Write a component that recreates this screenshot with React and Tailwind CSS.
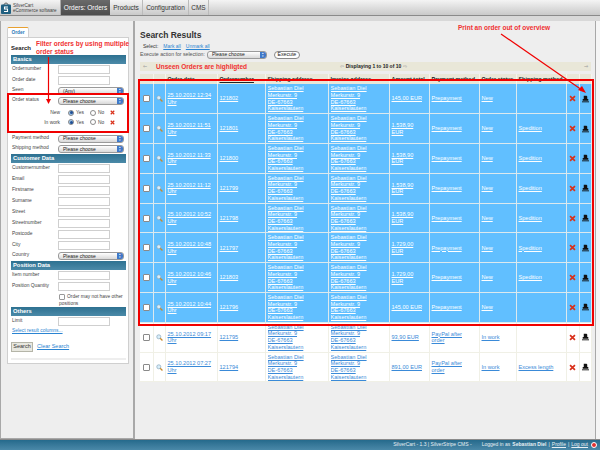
const rows = [
  { date: "25.10.2012 12:34", no: "121802", total: "145,00 EUR", pay: "Prepayment", status: "New", ship: "" },
  { date: "25.10.2012 11:51", no: "121801", total: "1.538,90 EUR", pay: "Prepayment", status: "New", ship: "Spedition" },
  { date: "25.10.2012 11:33", no: "121800", total: "1.538,90 EUR", pay: "Prepayment", status: "New", ship: "Spedition" },
  { date: "25.10.2012 11:12", no: "121799", total: "1.538,90 EUR", pay: "Prepayment", status: "New", ship: "Spedition" },
  { date: "25.10.2012 10:52", no: "121798", total: "1.538,90 EUR", pay: "Prepayment", status: "New", ship: "Spedition" },
  { date: "25.10.2012 10:48", no: "121797", total: "1.729,00 EUR", pay: "Prepayment", status: "New", ship: "Spedition" },
  { date: "25.10.2012 10:46", no: "121803", total: "1.729,00 EUR", pay: "Prepayment", status: "New", ship: "Spedition" },
  { date: "25.10.2012 10:44", no: "121796", total: "145,00 EUR", pay: "Prepayment", status: "New", ship: "" },
  { date: "25.10.2012 09:17", no: "121795", total: "93,90 EUR", pay: "PayPal after order", status: "In work", ship: "", seen: true },
  { date: "25.10.2012 07:27", no: "121794", total: "891,00 EUR", pay: "PayPal after order", status: "In work", ship: "Excess length", seen: true },
];

function Cross({ className = "w-[7px] h-[7px]" }) {
  return (
    <svg viewBox="0 0 10 10" className={className}>
      <path d="M1.5 1.5L8.5 8.5M8.5 1.5L1.5 8.5" stroke="#d9301a" strokeWidth="2.4" />
    </svg>
  );
}

function Magnifier() {
  return (
    <svg viewBox="0 0 10 10" className="w-[9px] h-[9px]">
      <circle cx="4" cy="4" r="2.9" fill="#d8eefa" stroke="#8aa8bc" strokeWidth="1" />
      <path d="M6 6L9.2 9.2" stroke="#c98a2b" strokeWidth="1.8" />
    </svg>
  );
}

function Printer() {
  return (
    <svg viewBox="0 0 10 10" className="w-[8px] h-[8px]">
      <path d="M2.5 0.5H6.5L7.5 1.5V5H9V7.5H1V5H2.5Z" fill="#111" />
      <rect x="0" y="8.4" width="10" height="1.3" fill="#111" />
    </svg>
  );
}

function SelectBox({ value = "Please choose", className = "w-[66px]" }) {
  return (
    <div className={`${className} h-[8px] rounded-[3px] border border-[#9a9a9a] bg-gradient-to-b from-white to-[#d8d8d8] flex items-center justify-between pl-[4px] text-[5px] leading-none text-[#222]`}>
      <span>{value}</span>
      <span className="w-[6px] h-full bg-[#3f78c8] rounded-r-[2px] flex flex-col items-center justify-center text-white text-[3px] leading-[3px]">
        <span>▴</span>
        <span>▾</span>
      </span>
    </div>
  );
}

function Field({ label }) {
  return (
    <div className="h-[11px] flex items-center">
      <span className="w-[47px] pl-[1px] text-[4.9px] text-[#444] whitespace-nowrap -translate-y-[1px]">{label}</span>
      <div className="w-[52px] h-[9px] border border-[#cfcfcf] bg-white" />
    </div>
  );
}

function SelectField({ label, value, h = "h-[11px]" }) {
  return (
    <div className={`${h} flex items-center`}>
      <span className="w-[47px] pl-[1px] text-[4.9px] text-[#444] whitespace-nowrap -translate-y-[1px]">{label}</span>
      <SelectBox value={value} />
    </div>
  );
}

function Heading({ children }) {
  return (
    <div className="h-[9px] flex items-center pl-[2px] bg-gradient-to-b from-[#2d7191] to-[#4b8aa8] text-white font-bold text-[5.8px] w-[115px]">
      {children}
    </div>
  );
}

function Radio({ checked }) {
  return (
    <span className={`w-[6px] h-[6px] rounded-full border border-[#8a8a8a] flex items-center justify-center ${checked ? "bg-[#9cc4ec]" : "bg-white"}`}>
      {checked && <span className="w-[3px] h-[3px] rounded-full bg-[#1f4f94]" />}
    </span>
  );
}

function StatusRow({ label }) {
  return (
    <div className="h-[9.5px] flex items-center text-[4.9px] text-[#444]">
      <span className="w-[57px] pr-[8px] text-right">{label}</span>
      <Radio checked />
      <span className="w-[16px] pl-[2px]">Yes</span>
      <Radio />
      <span className="w-[14px] pl-[2px]">No</span>
      <Cross className="w-[5px] h-[5px]" />
    </div>
  );
}

function Sidebar() {
  return (
    <aside className="w-[134px] shrink-0 bg-[#eeeeee] border border-[#a8a8a8] border-t-0 pt-[6px] pl-[6px] pr-[5px]">
      <div className="w-[22px] h-[10px] bg-white border border-b-0 border-[#d0d0d0] border-t-[#e8a030] rounded-t-[2px] text-[#2a78b8] font-bold text-[4.8px] flex items-center justify-center">
        Order
      </div>
      <div className="w-[122px] h-[327px] bg-white border border-[#cfcfcf] pl-[3px] pt-[6px]">
        <div className="text-[6px] font-bold leading-[9px] text-[#222] h-[11px]">Search</div>
        <Heading>Basics</Heading>
        <div className="flex flex-col">
          <Field label="Ordernumber" />
          <Field label="Order date" />
          <SelectField label="Seen" value="(Any)" h="h-[10px]" />
          <SelectField label="Order status" h="h-[10px]" />
          <div className="h-[2px]" />
          <StatusRow label="New" />
          <StatusRow label="In work" />
          <div className="h-[6px]" />
          <SelectField label="Payment method" />
          <SelectField label="Shipping method" h="h-[10px]" />
        </div>
        <Heading>Customer Data</Heading>
        <Field label="Customernumber" />
        <Field label="Email" />
        <Field label="Firstname" />
        <Field label="Surname" />
        <Field label="Street" />
        <Field label="Streetnumber" />
        <Field label="Postcode" />
        <Field label="City" />
        <SelectField label="Country" h="h-[10px]" />
        <Heading>Position Data</Heading>
        <Field label="Item number" />
        <Field label="Position Quantity" />
        <div className="pl-[48px] h-[15px] text-[4.9px] leading-[7px] text-[#444] pt-[1px]">
          <span className="inline-block w-[6px] h-[6px] border border-[#999] rounded-[1px] align-middle mr-[2px]" />
          Order may not have other positions
        </div>
        <Heading>Others</Heading>
        <Field label="Limit" />
        <div className="h-[8px] mb-[5px] pl-[1px] flex items-center text-[4.9px] text-[#2a84d2] underline">Select result columns...</div>
        <div className="flex items-center gap-[4px] h-[13px]">
          <div className="w-[22px] h-[10px] border border-[#b5b5a8] bg-[#e8e8e0] flex items-center justify-center text-[5.5px] text-[#333]">Search</div>
          <span className="text-[5.5px] text-[#2a84d2] underline">Clear Search</span>
        </div>
        <div className="mt-[5px] w-[115px] h-[2px] bg-[#eeeeee]" />
      </div>
    </aside>
  );
}

function TableHead() {
  const cols = ["", "", "Order date", "Ordernumber", "Shipping address", "Invoice address", "Amount total", "Payment method", "Order status", "Shipping method", "", ""];
  return (
    <thead>
      <tr className="h-[10px] bg-[#e9e7d8]">
        {cols.map((c, i) => (
          <th key={i} className={`border-r border-[#f6f5ec] px-[2px] text-left font-bold text-[5.4px] text-[#222] whitespace-nowrap overflow-hidden ${c === "Ordernumber" ? "underline" : ""}`}>
            {c}
          </th>
        ))}
      </tr>
    </thead>
  );
}

function OrderRow({ r }) {
  const link = r.seen ? "text-[#3a8ad8] underline" : "text-white underline";
  const cell = `border-r px-[2px] ${r.seen ? "border-[#f0f0e6]" : "border-[#dce9ee]"}`;
  return (
    <tr className={`h-[29.8px] text-[5.6px] leading-[6.7px] border-b ${r.seen ? "bg-white border-[#f0f0e6]" : "bg-[#61bfff] border-[#dce9ee]"}`}>
      <td className={cell}>
        <span className="block w-[7px] h-[7px] mx-auto bg-white border border-[#8a8a8a] rounded-[1px]" />
      </td>
      <td className={cell}><span className="flex justify-center"><Magnifier /></span></td>
      <td className={`${cell} ${link}`}>{r.date} Uhr</td>
      <td className={`${cell} ${link}`}>{r.no}</td>
      <td className={`${cell} ${link}`}>
        <div className="h-[27px] overflow-hidden whitespace-nowrap">Sebastian Diel<br />Merkurstr. 9<br />DE-67663<br />Kaiserslautern</div>
      </td>
      <td className={`${cell} ${link}`}>
        <div className="h-[27px] overflow-hidden whitespace-nowrap">Sebastian Diel<br />Merkurstr. 9<br />DE-67663<br />Kaiserslautern</div>
      </td>
      <td className={`${cell} ${link} pr-[6px]`}>{r.total}</td>
      <td className={`${cell} ${link}`}>{r.pay}</td>
      <td className={`${cell} ${link}`}>{r.status}</td>
      <td className={`${cell} ${link}`}>{r.ship}</td>
      <td className={cell}><span className="flex justify-center"><Cross /></span></td>
      <td className={cell}><span className="flex justify-center"><Printer /></span></td>
    </tr>
  );
}

function Results() {
  return (
    <main className="w-[462px] shrink-0 bg-[#eeeeee] border-l border-r border-[#a8a8a8] pl-[5px] pr-[4px] pt-[9px]">
      <h1 className="text-[8.5px] font-bold leading-[10px] text-[#333] h-[14px]">Search Results</h1>
      <div className="h-[6px] pl-[3px] flex items-center gap-[5px] text-[5px] text-[#333]">
        <span>Select:</span>
        <span className="text-[#2a84d2] underline">Mark all</span>
        <span className="text-[#2a84d2] underline">Unmark all</span>
      </div>
      <div className="h-[9px] flex items-center gap-[1px] text-[5.2px] text-[#555]">
        <span className="mr-[1px]">Execute action for selection:</span>
        <SelectBox className="w-[60px]" />
        <span className="ml-[6px] w-[26px] h-[8px] border border-[#888] rounded-[4px] bg-white flex items-center justify-center text-[#222]">Execute</span>
      </div>
      <div className="mt-[3px] w-[451px] h-[9px] bg-[#e9e7d8] flex items-center justify-between px-[3px] text-[5px] text-[#222]">
        <span className="text-[#999]">⇐</span>
        <span className="font-bold pl-[16px]">
          <span className="text-[#999] font-normal">⇦ </span>Displaying 1 to 10 of 10<span className="text-[#999] font-normal"> ⇨</span>
        </span>
        <span className="text-[#999]">⇒</span>
      </div>
      <table className="mt-[3px] w-[451px] table-fixed border-collapse border-b border-[#cfcfc5]">
        <colgroup>
          <col className="w-[13px]" />
          <col className="w-[12px]" />
          <col className="w-[52px]" />
          <col className="w-[48px]" />
          <col className="w-[63px]" />
          <col className="w-[61px]" />
          <col className="w-[40px]" />
          <col className="w-[50px]" />
          <col className="w-[37px]" />
          <col className="w-[50px]" />
          <col className="w-[13px]" />
          <col className="w-[12px]" />
        </colgroup>
        <TableHead />
        <tbody>
          {rows.map((r) => (
            <OrderRow key={r.no} r={r} />
          ))}
        </tbody>
      </table>
    </main>
  );
}

function Header() {
  return (
    <header className="h-[15px] bg-gradient-to-b from-[#f4f4f4] to-[#c9c9c9] flex items-stretch">
      <div className="w-[61px] flex items-center pl-[1px] gap-[2px] border-r border-[#aaa]">
        <svg viewBox="0 0 10 12" className="w-[10px] h-[12px] shrink-0">
          <path d="M3 3C3 0.5 7 0.5 7 3" fill="none" stroke="#333" strokeWidth="0.8" />
          <rect x="0" y="2.5" width="10" height="9.5" rx="1" fill="#1f5f80" />
          <path d="M7 5H3.5V7H6.5V9.5H3" fill="none" stroke="#fff" strokeWidth="1.1" />
        </svg>
        <div className="text-[4.6px] leading-[5px] text-[#444] whitespace-nowrap">SilverCart<br />eCommerce software</div>
      </div>
      <div className="w-[49px] bg-gradient-to-b from-[#6a6a6a] to-[#4d4d4d] flex items-center justify-center text-[6.5px] text-white">Orders: Orders</div>
      <div className="w-[33px] flex items-center justify-center text-[6.5px] text-[#333] border-r border-[#bbb]">Products</div>
      <div className="w-[46px] flex items-center justify-center text-[6.5px] text-[#333] border-r border-[#bbb]">Configuration</div>
      <div className="w-[20px] flex items-center justify-center text-[6.5px] text-[#333] border-r border-[#bbb]">CMS</div>
    </header>
  );
}

function Annotations() {
  return (
    <>
      <div className="absolute left-[7px] top-[93px] w-[122px] h-[40px] border-2 border-[#f00000]" />
      <div className="absolute left-[138px] top-[79px] w-[456px] h-[247px] border-2 border-[#f00000]" />
      <svg className="absolute inset-0 w-[600px] h-[450px] pointer-events-none" viewBox="0 0 600 450">
        <path d="M48.5 57V100" stroke="#f00000" strokeWidth="1.2" />
        <path d="M46 99L48.5 104L51 99Z" fill="#f00000" />
        <path d="M501 34L582 90" stroke="#f00000" strokeWidth="1.2" />
        <path d="M578 90L586 93L582 86Z" fill="#f00000" />
      </svg>
      <div className="absolute left-[36px] top-[40px] w-[98px] text-[6.5px] leading-[8px] font-bold text-[#f03030]">
        Filter orders by using multiple order status
      </div>
      <div className="absolute left-[156px] top-[62px] text-[6.5px] leading-[9px] font-bold text-[#f03030]">
        Unseen Orders are highligted
      </div>
      <div className="absolute left-[458px] top-[23.5px] text-[6.5px] leading-[8px] font-bold text-[#f03030]">
        Print an order out of overview
      </div>
    </>
  );
}

export default function App() {
  return (
    <div className="relative w-[600px] h-[450px] overflow-hidden bg-[#f5f5f5] font-['Liberation_Sans',Arial,sans-serif] flex flex-col">
      <Header />
      <div className="h-[1px] bg-[#8a8a8a]" />
      <div className="h-[5px] bg-[#d8d8d8]" />
      <div className="flex-1 flex min-h-0">
        <Sidebar />
        <Results />
      </div>
      <footer className="h-[11px] bg-gradient-to-b from-[#256a8c] to-[#4a88a8] border-t border-[#8a8a8a] flex items-center justify-end pr-[3px] gap-[10px] text-[5px] text-[#e8f0f4]">
        <span>SilverCart - 1.3 | SilverStripe CMS -</span>
        <span className="flex items-center gap-[2px]">
          Logged in as <b>Sebastian Diel</b> | <span className="underline">Profile</span> | <span className="underline">Log out</span>
          <span className="ml-[1px] w-[6px] h-[6px] rounded-full bg-[#e03030] border border-white" />
        </span>
      </footer>
      <Annotations />
    </div>
  );
}
